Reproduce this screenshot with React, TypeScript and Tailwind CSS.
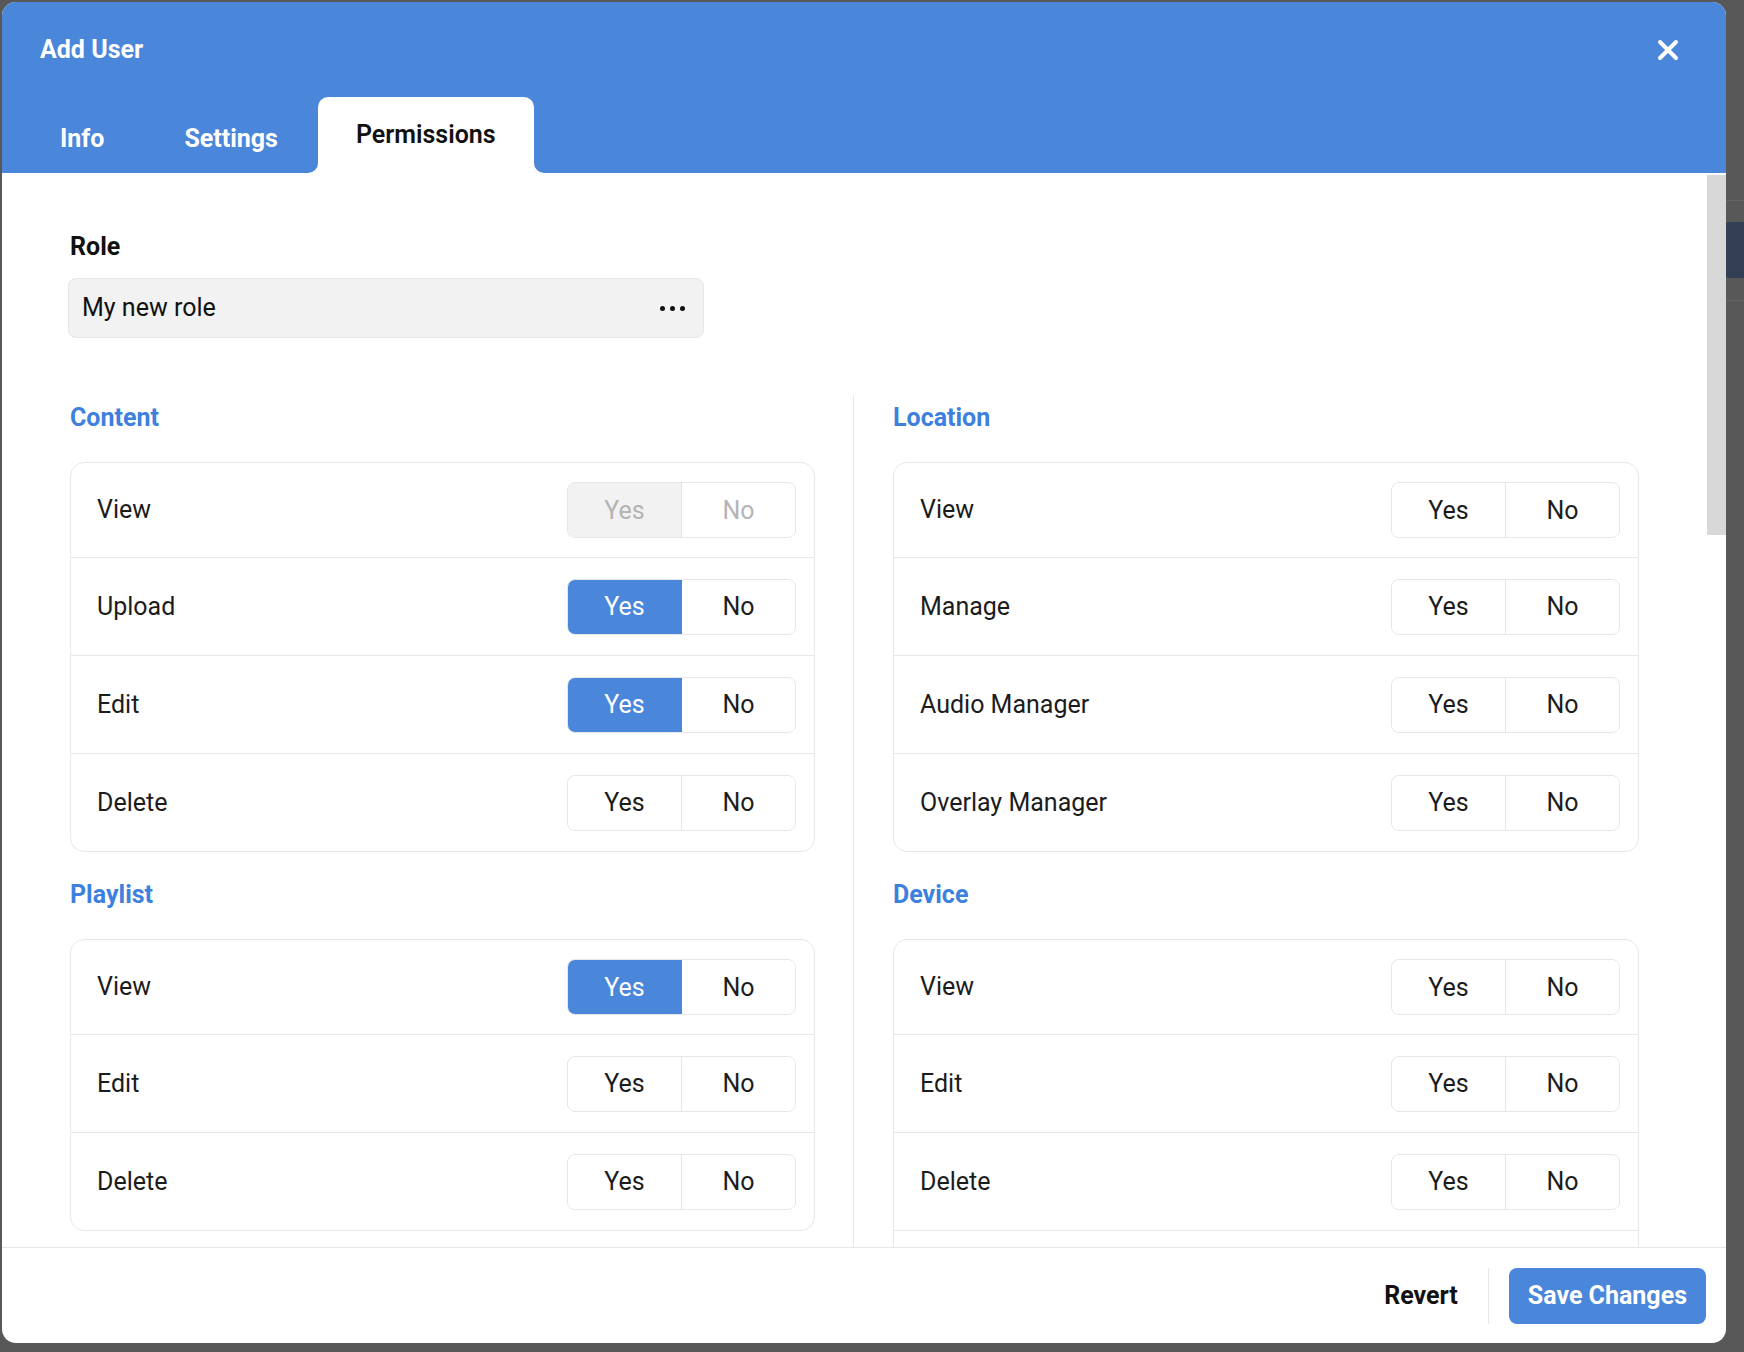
import React from 'react';
import clsx from 'clsx';

type ToggleState = 'disabled' | 'yes' | 'none';

type Row = { label: string; state: ToggleState; hidden?: boolean };

function Toggle({ state }: { state: ToggleState }) {
  const disabled = state === 'disabled';
  const yes = state === 'yes';
  return (
    <div className="flex h-[56px] w-[229px] rounded-[8px] border border-[#e6e6e6] overflow-hidden text-[25px] leading-none">
      <div
        className={clsx(
          'flex-1 flex items-center justify-center border-r',
          yes
            ? 'bg-[#4a86d9] text-white border-[#4a86d9]'
            : disabled
            ? 'bg-[#f2f2f2] text-[#b4b4b4] border-[#e3e3e3]'
            : 'bg-white text-[#1c1c1c] border-[#e6e6e6]'
        )}
      >
        Yes
      </div>
      <div
        className={clsx(
          'flex-1 flex items-center justify-center bg-white',
          disabled ? 'text-[#b4b4b4]' : 'text-[#1c1c1c]'
        )}
      >
        No
      </div>
    </div>
  );
}

function Card({ rows }: { rows: Row[] }) {
  return (
    <div className="rounded-[14px] border border-[#e8e8e8] bg-white">
      {rows.map((r, i) => (
        <div
          key={r.label + i}
          className={clsx(
            'flex items-center justify-between pl-[26px] pr-[18px]',
            i === 0 ? 'h-[94px]' : 'h-[98px] border-t border-[#e8e8e8]'
          )}
        >
          {!r.hidden && (
            <>
              <span className="text-[25px] text-[#1c1c1c]">{r.label}</span>
              <Toggle state={r.state} />
            </>
          )}
        </div>
      ))}
    </div>
  );
}

function Section({ title, rows, first }: { title: string; rows: Row[]; first?: boolean }) {
  return (
    <div>
      <div
        className={clsx(
          'text-[25px] font-bold leading-[28px] text-[#3d80dd] mb-[30px]',
          first ? 'mt-[9px]' : 'mt-[29px]'
        )}
      >
        {title}
      </div>
      <Card rows={rows} />
    </div>
  );
}

function CloseIcon() {
  return (
    <svg width="22" height="22" viewBox="0 0 22 22" fill="none">
      <path d="M3 3L19 19M19 3L3 19" stroke="white" strokeWidth="4" strokeLinecap="round" />
    </svg>
  );
}

export default function App() {
  const content: Row[] = [
    { label: 'View', state: 'disabled' },
    { label: 'Upload', state: 'yes' },
    { label: 'Edit', state: 'yes' },
    { label: 'Delete', state: 'none' },
  ];
  const playlist: Row[] = [
    { label: 'View', state: 'yes' },
    { label: 'Edit', state: 'none' },
    { label: 'Delete', state: 'none' },
  ];
  const location: Row[] = [
    { label: 'View', state: 'none' },
    { label: 'Manage', state: 'none' },
    { label: 'Audio Manager', state: 'none' },
    { label: 'Overlay Manager', state: 'none' },
  ];
  const device: Row[] = [
    { label: 'View', state: 'none' },
    { label: 'Edit', state: 'none' },
    { label: 'Delete', state: 'none' },
    { label: 'More', state: 'none', hidden: true },
  ];

  return (
    <div className="relative w-[1744px] h-[1352px] bg-[#585858] overflow-hidden font-['Roboto',sans-serif] pt-[2px] pl-[2px]">
      {/* background page fragment peeking at right */}
      <div className="absolute right-0 top-[222px] w-[22px] h-[56px] rounded-l-[8px] bg-[#333f55]" />
      <div className="absolute right-0 top-[200px] w-[18px] h-px bg-[#646464]" />
      <div className="absolute right-0 top-[300px] w-[18px] h-px bg-[#646464]" />

      <div className="relative w-[1724px] h-[1341px] rounded-[14px] overflow-hidden bg-white flex flex-col">
        {/* Header */}
        <div className="h-[171px] shrink-0 bg-[#4a86d9] flex flex-col">
          <div className="flex items-center justify-between pt-[34px] pl-[38px] pr-[47px]">
            <span className="text-[25px] font-bold leading-[28px] text-white">Add User</span>
            <CloseIcon />
          </div>
          <div className="mt-[33px] flex h-[76px] pl-[18px]">
            <div className="px-[40px] flex items-center pt-[8px] text-[25px] font-bold text-white">Info</div>
            <div className="px-[40px] flex items-center pt-[8px] text-[25px] font-bold text-white">Settings</div>
            <div className="relative px-[38px] flex items-center bg-white rounded-t-[10px] text-[25px] font-semibold text-[#111]">
              Permissions
              <div className="absolute bottom-0 -left-[10px] w-[10px] h-[10px] bg-white">
                <div className="w-full h-full bg-[#4a86d9] rounded-br-[10px]" />
              </div>
              <div className="absolute bottom-0 -right-[10px] w-[10px] h-[10px] bg-white">
                <div className="w-full h-full bg-[#4a86d9] rounded-bl-[10px]" />
              </div>
            </div>
          </div>
        </div>

        {/* Body */}
        <div className="h-[1074px] shrink-0 flex">
          <div className="flex-1 overflow-hidden pl-[68px] pr-[66px] pt-[60px]">
            <div className="text-[25px] font-bold leading-[28px] text-[#111]">Role</div>
            <div className="mt-[17px] -ml-[2px] w-[636px] h-[60px] rounded-[8px] border border-[#e6e6e6] bg-[#f2f2f2] flex items-center justify-between pl-[13px] pr-[18px]">
              <span className="text-[25px] text-[#111]">My new role</span>
              <div className="flex gap-[5px]">
                <div className="w-[5px] h-[5px] rounded-full bg-[#111]" />
                <div className="w-[5px] h-[5px] rounded-full bg-[#111]" />
                <div className="w-[5px] h-[5px] rounded-full bg-[#111]" />
              </div>
            </div>

            <div className="mt-[57px] grid grid-cols-[745px_1px_747px] gap-x-[38px] h-[1000px]">
              <div>
                <Section title="Content" rows={content} first />
                <Section title="Playlist" rows={playlist} />
              </div>
              <div className="bg-[#e8e8e8]" />
              <div className="ml-[1px]">
                <Section title="Location" rows={location} first />
                <Section title="Device" rows={device} />
              </div>
            </div>
          </div>
          {/* scrollbar */}
          <div className="w-[19px] shrink-0 bg-white">
            <div className="mt-[2px] h-[360px] bg-[#d8d8d8]" />
          </div>
        </div>

        {/* Footer */}
        <div className="h-[96px] shrink-0 border-t border-[#e6e6e6] flex items-center justify-end pr-[20px]">
          <span className="text-[25px] font-bold text-[#111]">Revert</span>
          <div className="ml-[30px] mr-[20px] w-px h-[56px] bg-[#e6e6e6]" />
          <button className="h-[56px] px-[19px] rounded-[8px] bg-[#4a86d9] text-[25px] font-bold text-white">
            Save Changes
          </button>
        </div>
      </div>
    </div>
  );
}
